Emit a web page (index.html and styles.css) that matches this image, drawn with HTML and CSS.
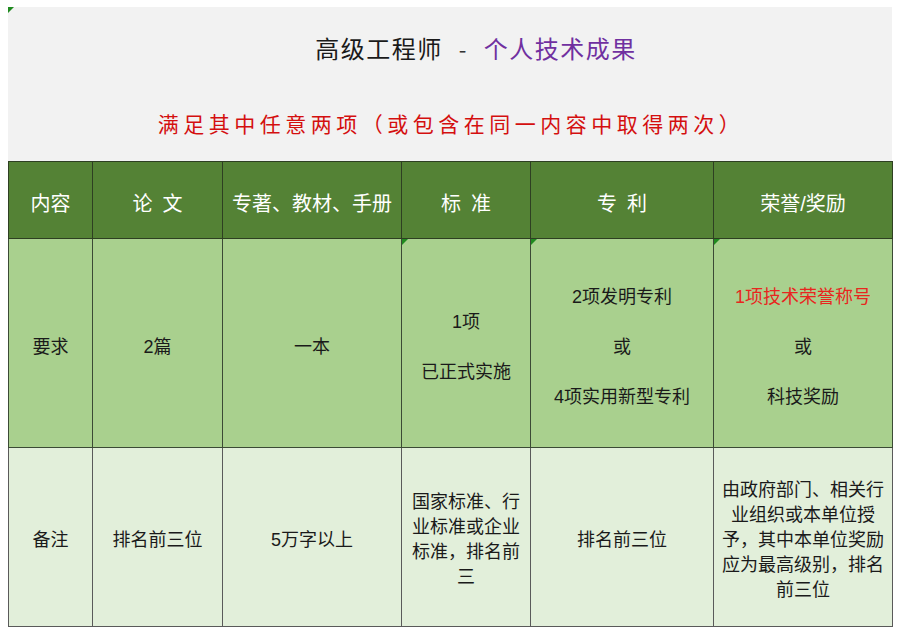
FILE: index.html
```html
<!DOCTYPE html>
<html lang="zh-CN">
<head>
<meta charset="utf-8">
<title>高级工程师 - 个人技术成果</title>
<link rel="stylesheet" href="styles.css">
</head>
<body>
<div class="sheet">
  <div class="banner mark">
    <div class="title"><span class="t-black">高级工程师</span><span class="dash">-</span><span class="t-purple">个人技术成果</span></div>
    <div class="subtitle">满足其中任意两项（或包含在同一内容中取得两次）</div>
  </div>
  <table class="grid">
    <colgroup>
      <col class="c1"><col class="c2"><col class="c3"><col class="c4"><col class="c5"><col class="c6">
    </colgroup>
    <tr class="head">
      <td>内容</td>
      <td>论&ensp;文</td>
      <td>专著、教材、手册</td>
      <td>标&ensp;准</td>
      <td>专&ensp;利</td>
      <td>荣誉/奖励</td>
    </tr>
    <tr class="req">
      <td>要求</td>
      <td>2篇</td>
      <td>一本</td>
      <td class="mark">1项<br><br>已正式实施</td>
      <td class="mark">2项发明专利<br><br>或<br><br>4项实用新型专利</td>
      <td class="mark"><span class="red">1项技术荣誉称号</span><br><br>或<br><br>科技奖励</td>
    </tr>
    <tr class="note">
      <td>备注</td>
      <td>排名前三位</td>
      <td>5万字以上</td>
      <td>国家标准、行<br>业标准或企业<br>标准，排名前<br>三</td>
      <td>排名前三位</td>
      <td>由政府部门、相关行<br>业组织或本单位授<br>予，其中本单位奖励<br>应为最高级别，排名<br>前三位</td>
    </tr>
  </table>
</div>
</body>
</html>
```

FILE: styles.css
```css
html, body {
  margin: 0;
  padding: 0;
  background: #ffffff;
}
body {
  font-family: "Liberation Sans", "Noto Sans CJK SC", sans-serif;
  color: #1a1a1a;
}
.sheet {
  padding: 7px 0 0 8px;
  width: 884px;
}
.banner {
  position: relative;
  background: #f2f2f2;
  height: 154px;
  box-sizing: border-box;
  padding-top: 24px;
}
.title {
  display: flex;
  justify-content: center;
  align-items: center;
  gap: 16px;
  height: 34px;
  line-height: 34px;
  font-family: "Noto Sans CJK SC", sans-serif;
  font-size: 24px;
  letter-spacing: 1.5px;
  padding-left: 52px;
}
.t-black { color: #1a1a1a; }
.dash { color: #333333; font-size: 22px; }
.t-purple { color: #7030a0; }
.subtitle {
  margin-top: 41px;
  height: 34px;
  line-height: 34px;
  text-align: center;
  font-family: "Noto Sans CJK SC", serif;
  font-size: 21px;
  letter-spacing: 4.5px;
  color: #d40f0f;
  padding-left: 2px;
}
.grid {
  border-collapse: collapse;
  table-layout: fixed;
  width: 884px;
}
.c1 { width: 84px; }
.c2 { width: 130px; }
.c3 { width: 179px; }
.c4 { width: 129px; }
.c5 { width: 183px; }
.c6 { width: 179px; }
.grid td {
  border: 1px solid #3b4a35;
  text-align: center;
  vertical-align: middle;
  padding: 8px 4px 0;
  font-size: 18px;
  line-height: 25px;
}
.head td {
  background: #548235;
  color: #ffffff;
  font-size: 20px;
  height: 68px;
  border-color: #2e3f22;
}
.req td {
  background: #a9d08e;
  height: 200px;
}
.note td {
  background: #e2efda;
  height: 172px;
  padding-top: 6px;
  border-color: #5a5a5a;
}
.red { color: #e8261e; }
.mark { position: relative; }
.mark::before {
  content: "";
  position: absolute;
  left: 0;
  top: 0;
  width: 0;
  height: 0;
  border-top: 6px solid #1f8a1f;
  border-right: 6px solid transparent;
}
```
